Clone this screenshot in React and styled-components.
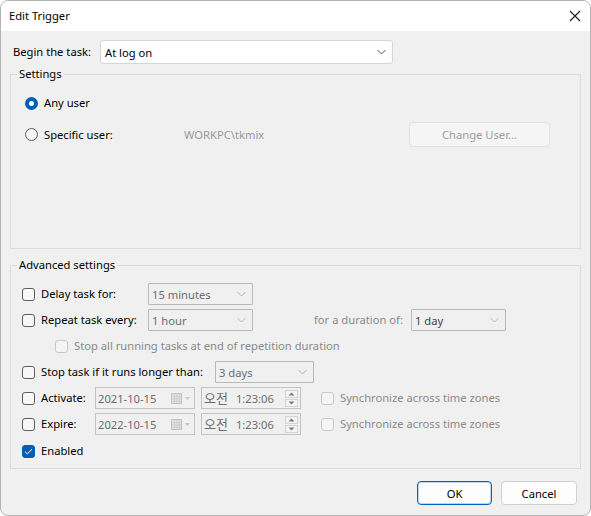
import React from "react";
import styled, { createGlobalStyle } from "styled-components";

const GlobalStyle = createGlobalStyle`
  body {
    margin: 0;
    background: #ffffff;
    font-family: "Segoe UI", "Noto Sans", "Noto Sans CJK KR", sans-serif;
    font-size: 11.2px;
    color: #000;
  }
  * { box-sizing: border-box; }
`;

const Window = styled.div`
  width: 591px;
  height: 516px;
  border: 1px solid #b4b4b4;
  border-radius: 8px;
  overflow: hidden;
  background: #f0f0f0;
  display: flex;
  flex-direction: column;
`;

const TitleBar = styled.div`
  height: 30px;
  background: #ffffff;
  display: flex;
  align-items: center;
  justify-content: space-between;
  padding: 0 9px 0 8px;
`;

const Title = styled.span`
  line-height: 16px;
`;

const Body = styled.div`
  flex: 1;
  padding: 0 9px;
  display: flex;
  flex-direction: column;
`;

const BeginRow = styled.div`
  margin-top: 9px;
  display: flex;
  align-items: center;
  padding-left: 3px;
`;

const Label = styled.span`
  width: ${(p) => (p.$w ? `${p.$w}px` : "auto")};
  flex: none;
  white-space: nowrap;
  line-height: 16px;
  color: ${(p) => (p.$muted ? "#8a8a8a" : "#000")};
  margin-left: ${(p) => p.$ml || 0}px;
`;

const Combo = styled.div`
  width: ${(p) => p.$w}px;
  height: ${(p) => p.$h || 22}px;
  flex: none;
  display: flex;
  align-items: center;
  justify-content: space-between;
  padding: 0 6px 0 ${(p) => (p.$disabled ? 3 : 4)}px;
  border: 1px solid ${(p) => (p.$disabled ? "#b9b9b9" : "#d6d6d6")};
  border-radius: ${(p) => (p.$disabled ? 1 : 3)}px;
  background: ${(p) => (p.$disabled ? "#f0f0f0" : "#ffffff")};
  color: ${(p) => (p.$disabled ? p.$tone || "#6d6d6d" : "#000")};
  margin-left: ${(p) => p.$ml || 0}px;
`;

const Chevron = ({ color = "#8a8a8a" }) => (
  <svg width="9" height="6" viewBox="0 0 9 6">
    <path d="M0.5 1 L4.5 5 L8.5 1" fill="none" stroke={color} strokeWidth="1" />
  </svg>
);

const Group = styled.fieldset`
  margin: ${(p) => p.$mt}px 0 0;
  padding: 0;
  border: 1px solid #dcdcdc;
  height: ${(p) => p.$h}px;
  min-width: 0;
`;

const Legend = styled.legend`
  margin-left: 6px;
  padding: 0 2px;
  line-height: 16px;
`;

const GroupContent = styled.div`
  padding: ${(p) => p.$pt}px 0 0 ${(p) => p.$pl}px;
  display: flex;
  flex-direction: column;
`;

const Row = styled.div`
  display: flex;
  align-items: center;
  height: ${(p) => p.$h || 26}px;
  margin-top: ${(p) => p.$mt || 0}px;
  padding-left: ${(p) => p.$indent || 0}px;
`;

const RadioDot = styled.span`
  width: 13px;
  height: 13px;
  border-radius: 50%;
  flex: none;
  margin-right: 6px;
  ${(p) =>
    p.$on
      ? `background: #ffffff; border: 4px solid #005fb8;`
      : `background: #f6f6f6; border: 1px solid #5d5d5d;`}
`;

const Check = styled.span`
  width: 13px;
  height: 13px;
  flex: none;
  border-radius: 3px;
  margin-right: 6px;
  margin-left: ${(p) => p.$ml || 0}px;
  display: flex;
  align-items: center;
  justify-content: center;
  border: 1px solid
    ${(p) => (p.$on ? "#005fb8" : p.$disabled ? "#c9c9c9" : "#5f5f5f")};
  background: ${(p) => (p.$on ? "#005fb8" : p.$disabled ? "#f5f5f5" : "#f7f7f7")};
`;

const CheckMark = () => (
  <svg width="9" height="7" viewBox="0 0 9 7">
    <path d="M1 3.6 L3.3 5.8 L8 1.2" fill="none" stroke="#fff" strokeWidth="1" />
  </svg>
);

const UserName = styled.span`
  width: 225px;
  flex: none;
  color: #9a9a9a;
`;

const FlatButton = styled.button`
  width: ${(p) => p.$w}px;
  height: ${(p) => p.$h || 24}px;
  font: inherit;
  border-radius: 4px;
  padding: 0;
  border: 1px solid ${(p) => (p.$primary ? "#0067c0" : p.$disabled ? "#e0e0e0" : "#d0d0d0")};
  background: ${(p) => (p.$disabled ? "#f5f5f5" : "#fdfdfd")};
  color: ${(p) => (p.$disabled ? "#9d9d9d" : "#000")};
  box-shadow: ${(p) => (p.$primary ? "inset 0 0 0 1px #b9d3ee" : "none")};
`;

const Picker = styled.div`
  width: 100px;
  height: 22px;
  flex: none;
  display: flex;
  align-items: center;
  justify-content: space-between;
  border: 1px solid #c3c3c3;
  background: #f0f0f0;
  color: #6d6d6d;
  padding: 0 2px 0 2px;
  margin-left: ${(p) => p.$ml || 0}px;
`;

const PickerText = styled.span`
  display: flex;
  align-items: center;
  gap: ${(p) => p.$gap || 0}px;
`;

const Korean = styled.span`
  font-family: "Noto Sans CJK KR", sans-serif;
  font-size: 13px;
  line-height: 16px;
  color: #6d6d6d;
`;

const CalendarIcon = () => (
  <svg width="21" height="12" viewBox="0 0 21 12">
    <rect x="0.5" y="1.5" width="10" height="10" fill="#e6e6e6" stroke="#c2c2c2" />
    <path d="M1 4.5 H10 M1 7 H10 M1 9.5 H10 M3.5 2 V11 M6 2 V11 M8.5 2 V11" stroke="#cdcdcd" strokeWidth="1" />
    <path d="M14 5 L19 5 L16.5 8 Z" fill="#c4c4c4" />
  </svg>
);

const Spin = styled.div`
  display: flex;
  flex-direction: column;
  gap: 1px;
`;

const SpinBtn = styled.span`
  width: 13px;
  height: 8px;
  border: 1px solid #d3d3d3;
  background: #f4f4f4;
  display: flex;
  align-items: center;
  justify-content: center;
`;

const SpinArrow = ({ up }) => (
  <svg width="7" height="4" viewBox="0 0 7 4">
    <path d={up ? "M0.5 3.5 L3.5 0.5 L6.5 3.5 Z" : "M0.5 0.5 L3.5 3.5 L6.5 0.5 Z"} fill="#7a7a7a" />
  </svg>
);

const Footer = styled.div`
  display: flex;
  justify-content: flex-end;
  gap: 9px;
  padding: 12px 4px 0 0;
`;

const CloseIcon = () => (
  <svg width="12" height="12" viewBox="0 0 12 12">
    <path d="M1 1 L11 11 M11 1 L1 11" stroke="#1a1a1a" strokeWidth="1.1" />
  </svg>
);

function DateTimeRow({ label, date }) {
  return (
    <Row>
      <Check />
      <Label $w={54}>{label}</Label>
      <Picker>
        <PickerText>{date}</PickerText>
        <CalendarIcon />
      </Picker>
      <Picker $ml={6}>
        <PickerText $gap={8}>
          <Korean>오전</Korean>
          <span>1:23:06</span>
        </PickerText>
        <Spin>
          <SpinBtn>
            <SpinArrow up />
          </SpinBtn>
          <SpinBtn>
            <SpinArrow />
          </SpinBtn>
        </Spin>
      </Picker>
      <Check $disabled $ml={20} />
      <Label $muted>Synchronize across time zones</Label>
    </Row>
  );
}

export default function App() {
  return (
    <>
      <GlobalStyle />
      <Window>
        <TitleBar>
          <Title>Edit Trigger</Title>
          <CloseIcon />
        </TitleBar>
        <Body>
          <BeginRow>
            <Label $w={87}>Begin the task:</Label>
            <Combo $w={293} $h={24}>
              <span>At log on</span>
              <Chevron color="#555" />
            </Combo>
          </BeginRow>

          <Group $mt={2} $h={183}>
            <Legend>Settings</Legend>
            <GroupContent $pt={11} $pl={14}>
              <Row $h={20}>
                <RadioDot $on />
                <Label>Any user</Label>
              </Row>
              <Row $h={25} $mt={9}>
                <RadioDot />
                <Label $w={140}>Specific user:</Label>
                <UserName>WORKPC\tkmix</UserName>
                <FlatButton $w={141} $h={25} $disabled>
                  Change User...
                </FlatButton>
              </Row>
            </GroupContent>
          </Group>

          <Group $mt={8} $h={212}>
            <Legend>Advanced settings</Legend>
            <GroupContent $pt={8} $pl={11}>
              <Row>
                <Check />
                <Label $w={107}>Delay task for:</Label>
                <Combo $w={105} $disabled>
                  <span>15 minutes</span>
                  <Chevron color="#b4b4b4" />
                </Combo>
              </Row>
              <Row>
                <Check />
                <Label $w={107}>Repeat task every:</Label>
                <Combo $w={105} $disabled>
                  <span>1 hour</span>
                  <Chevron color="#b4b4b4" />
                </Combo>
                <Label $muted $ml={61} $w={97}>
                  for a duration of:
                </Label>
                <Combo $w={95} $disabled $tone="#444">
                  <span>1 day</span>
                  <Chevron color="#b4b4b4" />
                </Combo>
              </Row>
              <Row $indent={33}>
                <Check $disabled />
                <Label $muted>Stop all running tasks at end of repetition duration</Label>
              </Row>
              <Row>
                <Check />
                <Label $w={174}>Stop task if it runs longer than:</Label>
                <Combo $w={99} $disabled>
                  <span>3 days</span>
                  <Chevron color="#b4b4b4" />
                </Combo>
              </Row>
              <DateTimeRow label="Activate:" date="2021-10-15" />
              <DateTimeRow label="Expire:" date="2022-10-15" />
              <Row $mt={1}>
                <Check $on>
                  <CheckMark />
                </Check>
                <Label>Enabled</Label>
              </Row>
            </GroupContent>
          </Group>

          <Footer>
            <FlatButton $w={75} $primary>
              OK
            </FlatButton>
            <FlatButton $w={76}>Cancel</FlatButton>
          </Footer>
        </Body>
      </Window>
    </>
  );
}
